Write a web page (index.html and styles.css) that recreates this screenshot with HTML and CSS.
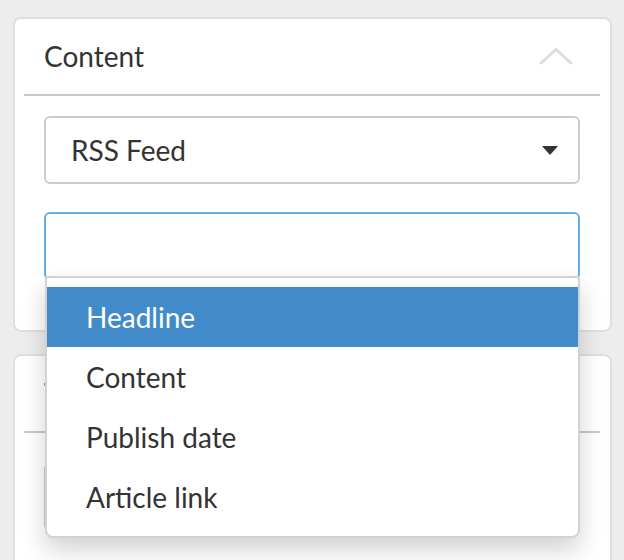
FILE: index.html
```html
<!DOCTYPE html>
<html lang="en">
<head>
<meta charset="utf-8">
<title>Content settings</title>
<link rel="stylesheet" href="styles.css">
</head>
<body>
<div class="page">
  <section class="card">
    <header class="card-head">
      <span class="card-title">Content</span>
      <svg class="chevron" width="34" height="18" viewBox="0 0 34 18" aria-hidden="true">
        <polyline points="2,16 17,2.5 32,16" fill="none" stroke="#dcdcdc" stroke-width="3" stroke-linecap="round" stroke-linejoin="round"/>
      </svg>
    </header>
    <div class="card-rule"></div>
    <div class="card-body">
      <div class="select">
        <span class="select-value">RSS Feed</span>
        <span class="caret"></span>
      </div>
      <div class="field">
        <div class="input"></div>
        <ul class="menu">
          <li class="menu-item is-active">Headline</li>
          <li class="menu-item">Content</li>
          <li class="menu-item">Publish date</li>
          <li class="menu-item">Article link</li>
        </ul>
      </div>
    </div>
  </section>
  <section class="card card-second">
    <header class="card-head">
      <span class="card-title">Text style</span>
      <svg class="chevron" width="34" height="18" viewBox="0 0 34 18" aria-hidden="true">
        <polyline points="2,16 17,2.5 32,16" fill="none" stroke="#dcdcdc" stroke-width="3" stroke-linecap="round" stroke-linejoin="round"/>
      </svg>
    </header>
    <div class="card-rule"></div>
    <div class="card-body card-body-second">
      <div class="select">
        <span class="select-value">Lato</span>
        <span class="caret"></span>
      </div>
    </div>
  </section>
</div>
</body>
</html>
```

FILE: styles.css
```css
* {
  box-sizing: border-box;
}

html, body {
  margin: 0;
  padding: 0;
  background: #ededed;
  height: 100%;
  overflow: hidden;
}

body {
  font-family: Lato, "Open Sans", sans-serif;
  font-size: 28px;
  line-height: 40px;
  color: #333;
}

.page {
  padding: 17px 12px 0 13px;
  display: flex;
  flex-direction: column;
  gap: 22px;
}

.card {
  background: #fff;
  border: 2px solid #dfdfdf;
  border-radius: 8px;
}

.card-head {
  display: flex;
  align-items: center;
  justify-content: space-between;
  padding: 17px 37px 18px 29px;
}

.card-title {
  display: block;
  height: 40px;
}

.chevron {
  display: block;
}

.card-rule {
  height: 2px;
  background: #c8c8c8;
  margin: 0 10px 0 9px;
}

.card-body {
  display: flex;
  flex-direction: column;
  gap: 28px;
  padding: 20px 30px 50px 29px;
}

.card-body-second {
  padding-top: 30px;
  padding-bottom: 120px;
}

.select {
  height: 68px;
  border: 2px solid #cccccc;
  border-radius: 6px;
  display: flex;
  align-items: center;
  justify-content: space-between;
  padding: 0 20px 0 25px;
}

.caret {
  width: 0;
  height: 0;
  border-top: 9px solid #333;
  border-left: 8px solid transparent;
  border-right: 8px solid transparent;
}

.field {
  position: relative;
}

.input {
  height: 68px;
  border: 2px solid #64ade6;
  border-radius: 6px;
}

.menu {
  position: absolute;
  z-index: 10;
  top: 64px;
  left: 1px;
  right: 0;
  margin: 0;
  padding: 9px 0;
  list-style: none;
  background: #fff;
  border: 2px solid #d2d2d2;
  border-radius: 2px 2px 8px 8px;
  box-shadow: 0 12px 24px rgba(0, 0, 0, 0.18);
}

.menu-item {
  height: 60px;
  padding: 10px 0 10px 39px;
  color: #333;
}

.menu-item.is-active {
  background: #428bca;
  color: #fff;
}
```
